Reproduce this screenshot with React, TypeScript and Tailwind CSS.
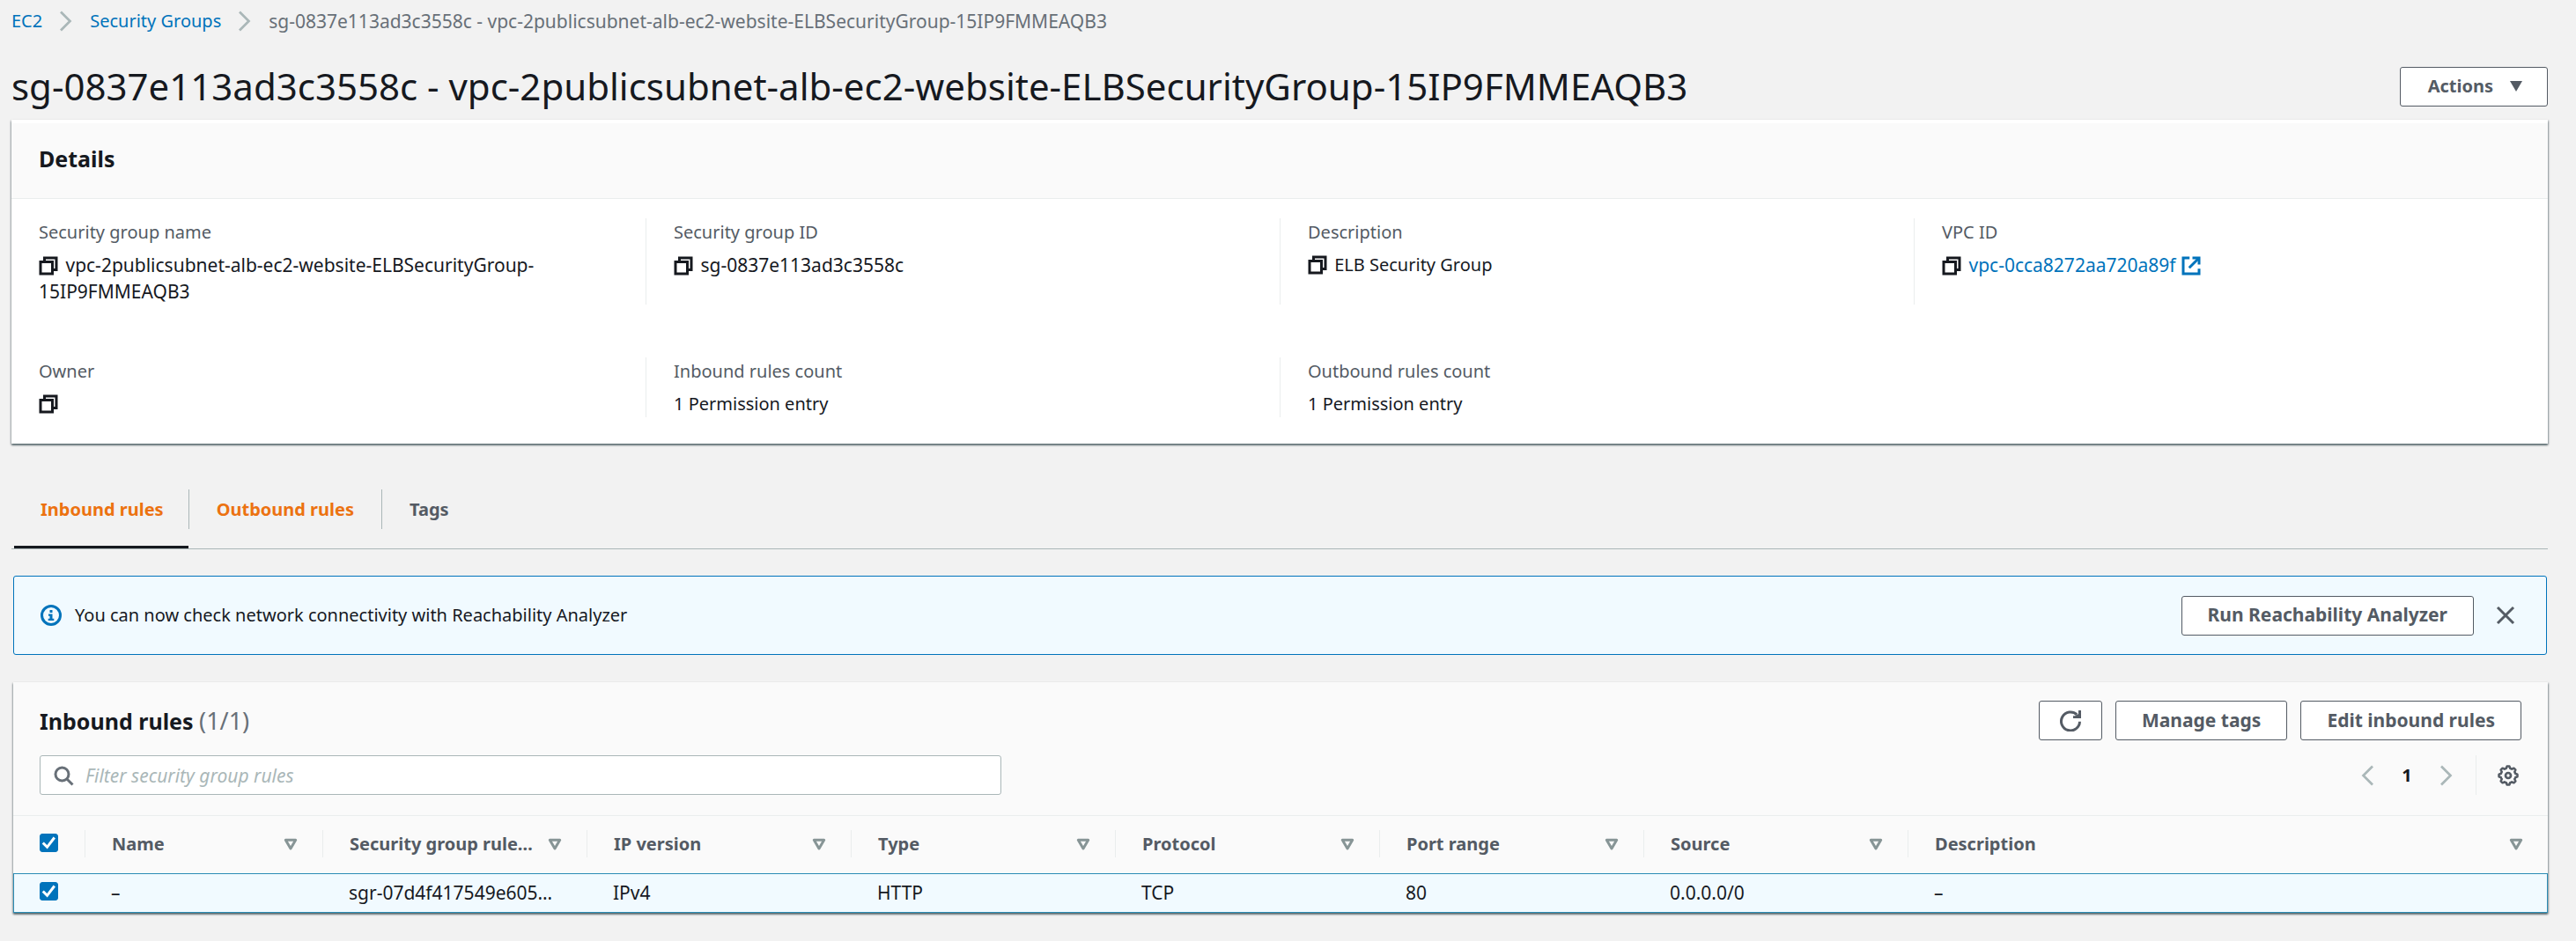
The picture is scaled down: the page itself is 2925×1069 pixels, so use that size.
import React from 'react';

const SANS = 'font-["Noto_Sans","Open_Sans",sans-serif]';

function CopyIcon() {
  return (
    <svg viewBox="0 0 16 16" className="mr-0.5 -ml-px inline-block size-6 align-[-5px] text-[#16191f]" fill="none" stroke="currentColor" strokeWidth="2">
      <path d="M2 5h9v9H2z" />
      <path d="M5 5V2h9v9h-3" />
    </svg>
  );
}

function ExternalIcon() {
  return (
    <svg viewBox="0 0 16 16" className="inline-block size-6 align-[-5px]" fill="none" stroke="currentColor" strokeWidth="2">
      <path d="M14 10.2V14H2V2h4.800" />
      <path d="M9 2h5v5" />
      <path d="M6.500 9.500L14 2" />
    </svg>
  );
}

function ChevronRight({ className }: { className: string }) {
  return (
    <svg viewBox="0 0 16 16" className={className} fill="none" stroke="currentColor" strokeWidth="1.8">
      <path d="M4 1l7 7-7 7" />
    </svg>
  );
}

function FilterIcon() {
  return (
    <svg viewBox="0 0 16 16" className="size-6 shrink-0 text-[#879596]" fill="none" stroke="currentColor" strokeWidth="2" strokeLinejoin="round">
      <path d="M4.200 4.900h7.600L8 11.300z" />
    </svg>
  );
}

function GearIcon() {
  const points = Array.from({ length: 96 }, (_, i) => {
    const angle = (i / 96) * Math.PI * 2;
    const wave = Math.max(-1, Math.min(1, 2 * Math.cos(8 * angle)));
    const radius = 6.3 + 0.7 * wave;
    return `${(8 + radius * Math.cos(angle)).toFixed(2)},${(8 + radius * Math.sin(angle)).toFixed(2)}`;
  }).join(' ');
  return (
    <svg viewBox="0 0 16 16" className="size-6" fill="none" stroke="currentColor" strokeLinejoin="round">
      <polygon points={points} strokeWidth="1.700" />
      <circle cx="8" cy="8" r="2" strokeWidth="1.800" />
    </svg>
  );
}

function Checkbox({ label }: { label: string }) {
  return (
    <span className="relative block size-[21px]">
      <input type="checkbox" defaultChecked aria-label={label} className="peer block size-[21px] appearance-none rounded-[3px] border border-[#687078] bg-white checked:border-[#0073bb] checked:bg-[#0073bb]" />
      <svg viewBox="0 0 14 14" className="pointer-events-none absolute inset-0 hidden size-[21px] text-white peer-checked:block" fill="none" stroke="currentColor" strokeWidth="2">
        <path d="M2.500 7l3.200 3.200 5.500-7.200" />
      </svg>
    </span>
  );
}

function Button({ children, className = 'px-[29px] text-[21px]', label }: { children: React.ReactNode; className?: string; label?: string }) {
  return (
    <button type="button" aria-label={label} className={`flex h-[45px] items-center rounded-[3px] border border-[#545b64] bg-white font-bold text-[#545b64] ${className}`}>
      {children}
    </button>
  );
}

function Field({ label, first, children }: { label: string; first?: boolean; children: React.ReactNode }) {
  return (
    <div className={first ? 'pr-[120px] pl-[31px]' : 'border-l border-[#eaeded] pr-[120px] pl-[31px]'}>
      <dt className="pt-px leading-[30px] text-[#545b64]">{label}</dt>
      <dd className="mt-[7px] min-h-[30px] leading-[30px] text-[#16191f]">{children}</dd>
    </div>
  );
}

const columns = [
  { name: 'Name', value: '–' },
  { name: 'Security group rule…', value: 'sgr-07d4f417549e605…' },
  { name: 'IP version', value: 'IPv4' },
  { name: 'Type', value: 'HTTP' },
  { name: 'Protocol', value: 'TCP' },
  { name: 'Port range', value: '80' },
  { name: 'Source', value: '0.0.0.0/0' },
  { name: 'Description', value: '–' },
];

const PANEL = 'bg-white shadow-[0_2px_2px_0_rgba(0,28,36,0.45),1px_1px_2px_0_rgba(0,28,36,0.3),-1px_1px_2px_0_rgba(0,28,36,0.2)]';

export default function App() {
  return (
    <div className={`min-h-screen bg-[#f2f2f2] pr-8 pb-8 pl-[13px] text-[20px] text-[#16191f] ${SANS}`}>
      <nav aria-label="Breadcrumb" className="flex h-12 items-center leading-[30px]">
        <a href="#ec2" className="text-[#0073bb]">EC2</a>
        <ChevronRight className="mx-[15px] size-6 text-[#aab7b8]" />
        <a href="#groups" className="text-[#0073bb]">Security Groups</a>
        <ChevronRight className="mx-[15px] size-6 text-[#aab7b8]" />
        <span className="text-[21px] text-[#687078]">sg-0837e113ad3c3558c - vpc-2publicsubnet-alb-ec2-website-ELBSecurityGroup-15IP9FMMEAQB3</span>
      </nav>

      <header className="flex h-[88px] items-center justify-between pt-3">
        <h1 className="text-[42px] leading-[54px]">sg-0837e113ad3c3558c - vpc-2publicsubnet-alb-ec2-website-ELBSecurityGroup-15IP9FMMEAQB3</h1>
        <Button className="gap-[18px] pr-[27px] pl-[31px]">
          Actions
          <svg viewBox="0 0 16 12" className="h-3 w-4" fill="currentColor"><path d="M1 0h14L8 12z" /></svg>
        </Button>
      </header>

      <section className={PANEL}>
        <div className="flex h-[90px] items-center border-t-4 border-b border-t-white border-b-[#eaeded] bg-[#fafafa] px-[31px] pb-1">
          <h2 className="text-[25px] leading-[33px] font-bold">Details</h2>
        </div>
        <dl className="grid grid-cols-4 gap-y-[60px] pt-[22px] pb-[30px]">
          <Field label="Security group name" first>
            <div className="text-[21px]"><CopyIcon /> vpc-2publicsubnet-alb-ec2-website-ELBSecurityGroup-15IP9FMMEAQB3</div>
          </Field>
          <Field label="Security group ID">
            <div className="text-[21px]"><CopyIcon /> sg-0837e113ad3c3558c</div>
          </Field>
          <Field label="Description"><CopyIcon /> ELB Security Group</Field>
          <Field label="VPC ID">
            <div className="text-[21px]"><CopyIcon /> <a href="#vpc" className="text-[#0073bb]">vpc-0cca8272aa720a89f <ExternalIcon /></a></div>
          </Field>
          <Field label="Owner" first><CopyIcon /></Field>
          <Field label="Inbound rules count">1 Permission entry</Field>
          <Field label="Outbound rules count">1 Permission entry</Field>
        </dl>
      </section>

      <div role="tablist" className="mt-[38px] flex h-[82px] border-b border-[#aab7b8] pl-[3px] font-bold">
        <button type="button" role="tab" aria-selected="true" className="flex h-[81px] flex-col border-b-[3px] border-[#16191f] pr-[28px] pl-[30px] text-[#ec7211]">
          <span className="mt-[14px] leading-[45px]">Inbound rules</span>
        </button>
        <button type="button" role="tab" aria-selected="false" className="mt-[14px] h-[45px] border-x border-[#aab7b8] px-[31px] text-[#ec7211]">Outbound rules</button>
        <button type="button" role="tab" aria-selected="false" className="mt-[14px] h-[45px] px-[31px] text-[#545b64]">Tags</button>
      </div>

      <div role="status" className="mt-[30px] mr-px ml-0.5 flex h-[90px] items-center rounded-[3px] border border-[#0073bb] bg-[#f1faff] pr-[34px] pl-[30px]">
        <svg viewBox="0 0 16 16" className="size-6 text-[#0073bb]" fill="currentColor">
          <circle cx="8" cy="8" r="7" fill="none" stroke="currentColor" strokeWidth="2" />
          <path d="M7 4h2v2H7zM6 7h3v3.500h1.200V12H5.800v-1.500H7v-2H6z" />
        </svg>
        <p className="ml-[15px] flex-1">You can now check network connectivity with Reachability Analyzer</p>
        <Button>Run Reachability Analyzer</Button>
        <button type="button" aria-label="Dismiss" className="ml-6 text-[#545b64]">
          <svg viewBox="0 0 16 16" className="size-6" fill="none" stroke="currentColor" strokeWidth="2"><path d="M2 2l12 12M14 2L2 14" /></svg>
        </button>
      </div>

      <section className={`mt-[31px] ml-0.5 ${PANEL}`}>
        <div className="border-b border-[#eaeded] bg-[#fafafa] px-[30px] pt-[21px] pb-[23px]">
          <div className="flex items-center gap-[15px]">
            <h2 className="flex-1 text-[25px] leading-[33px] font-bold">Inbound rules <span className="text-[27px] font-normal text-[#687078]">(1/1)</span></h2>
            <Button label="Refresh" className="px-[23px]">
              <svg viewBox="0 0 16 16" className="size-6" fill="none" stroke="currentColor" strokeWidth="2">
                <path d="M15 8.500a7 7 0 1 1-2.200-5.300" />
                <path d="M16 0v6H10V4.200h1.600L14 2.600V0z" fill="currentColor" stroke="none" />
              </svg>
            </Button>
            <Button>Manage tags</Button>
            <Button>Edit inbound rules</Button>
          </div>
          <div className="mt-[17px] flex items-center justify-between">
            <div className="relative max-w-[1092px] flex-1">
              <svg viewBox="0 0 16 16" className="absolute top-[11px] left-[15px] size-6 text-[#687078]" fill="none" stroke="currentColor" strokeWidth="2">
                <circle cx="7" cy="7" r="5" /><path d="M10.500 10.500l4.500 4.500" />
              </svg>
              <input type="text" aria-label="Filter security group rules" placeholder="Filter security group rules" className="block h-[45px] w-full rounded-[3px] border border-[#aab7b8] bg-white pr-4 pl-[51px] text-[21px] placeholder:text-[#aab7b8] placeholder:italic" />
            </div>
            <div className="mr-[3px] flex items-center">
              <button type="button" aria-label="Previous page" className="text-[#aab7b8]"><ChevronRight className="size-6 rotate-180" /></button>
              <span className="w-[66px] text-center font-bold">1</span>
              <button type="button" aria-label="Next page" className="text-[#aab7b8]"><ChevronRight className="size-6" /></button>
              <span className="mr-6 ml-[21px] h-[45px] w-px bg-[#eaeded]" />
              <button type="button" aria-label="Preferences" className="text-[#545b64]"><GearIcon /></button>
            </div>
          </div>
        </div>
        <table className="w-full table-fixed border-collapse text-left">
          <colgroup>
            <col className="w-[81px]" />
            <col className="w-[270px]" />
            <col className="w-[300px]" />
            <col className="w-[300px]" />
            <col className="w-[300px]" />
            <col className="w-[300px]" />
            <col className="w-[300px]" />
            <col className="w-[300px]" />
            <col />
          </colgroup>
          <thead className="bg-[#fafafa]">
            <tr className="h-[65px]">
              <th scope="col" className="p-0 pb-1 pl-[30px]"><Checkbox label="Select all rules" /></th>
              {columns.map((c) => (
                <th key={c.name} scope="col" className="p-0 pb-0.5 font-bold text-[#545b64]">
                  <div className="flex h-[31px] items-center justify-between border-l border-[#eaeded] pr-6 pl-[30px]">
                    <span className="whitespace-nowrap">{c.name}</span>
                    <FilterIcon />
                  </div>
                </th>
              ))}
            </tr>
          </thead>
          <tbody>
            <tr className="h-[45px] bg-[#f1faff] outline-1 -outline-offset-1 outline-[#2b8cb5]">
              <td className="p-0 pb-1 pl-[30px]"><Checkbox label="Select rule" /></td>
              {columns.map((c) => (
                <td key={c.name} className="truncate py-0 pr-4 pl-[30px] text-[21px]">{c.value}</td>
              ))}
            </tr>
          </tbody>
        </table>
      </section>
    </div>
  );
}
